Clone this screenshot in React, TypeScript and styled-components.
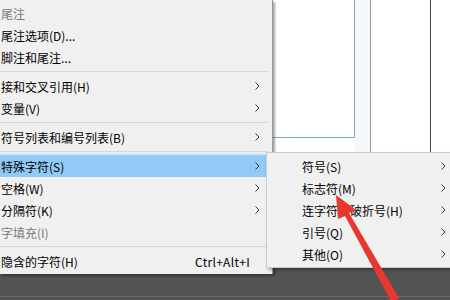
import styled, { createGlobalStyle } from 'styled-components';

const GlobalStyle = createGlobalStyle`
  html, body {
    margin: 0;
    padding: 0;
    background: #ffffff;
  }
  body {
    font-family: "Microsoft YaHei", "Noto Sans CJK SC", "Noto Sans", sans-serif;
    font-size: 12px;
  }
`;

const Page = styled.div`
  position: relative;
  width: 450px;
  height: 300px;
  overflow: hidden;
  display: flex;
  flex-direction: column;
`;

// documento de fondo
const Workspace = styled.div`
  height: 266px;
  display: flex;
  background: #ffffff;
`;

const FrameCol = styled.div`
  width: 355px;
`;

const Frame = styled.div`
  height: 137px;
  border-right: 1px solid #82a8bd;
  border-bottom: 1px solid #82a8bd;
`;

const Column = styled.div<{ $w: number; $bg: string; $line: string }>`
  width: ${(p) => p.$w}px;
  background: ${(p) => p.$bg};
  border-right: 1px solid ${(p) => p.$line};
`;

const DarkBar = styled.div`
  flex: 1;
  background: #535353;
  display: flex;
  flex-direction: column;
  justify-content: flex-end;
`;

const BarLine = styled.div`
  height: 3px;
  border-top: 1px solid #696969;
`;

// menús
const Menu = styled.div`
  position: absolute;
  left: 0;
  top: 0;
  width: 272px;
  padding: 2px 0 2px 0;
  background: #f0f0f0;
  border-right: 1px solid #999999;
  box-shadow: 2px 2px 2px rgba(0, 0, 0, 0.35);
`;

const SubMenu = styled.div`
  position: absolute;
  left: 266px;
  top: 152px;
  width: 190px;
  padding: 2px 0 2px 0;
  background: #f0f0f0;
  border: 1px solid #cccccc;
  box-shadow: 2px 2px 3px rgba(0, 0, 0, 0.35);
`;

const Item = styled.div<{ $active?: boolean; $disabled?: boolean; $indent?: number; $right?: number }>`
  height: 22px;
  display: flex;
  align-items: center;
  padding: 0 ${(p) => p.$right ?? 11}px 0 ${(p) => p.$indent ?? 1}px;
  margin-right: ${(p) => (p.$active ? 6 : 0)}px;
  color: ${(p) => (p.$disabled ? '#7b7b7b' : '#000000')};
  background: ${(p) => (p.$active ? '#92c9f7' : 'transparent')};
  box-shadow: ${(p) => (p.$active ? '0 -2px 0 #d4e8fb' : 'none')};
  white-space: nowrap;
`;

const Label = styled.span`
  flex: 1;
`;

const Shortcut = styled.span`
  margin-right: 3px;
  letter-spacing: 0.3px;
`;

const Slot = styled.span`
  width: 8px;
  display: flex;
  justify-content: center;
`;

const Separator = styled.div`
  height: 7px;
  margin-right: 4px;
  display: flex;
  align-items: center;
  &::after {
    content: '';
    flex: 1;
    height: 1px;
    background: #d7d7d7;
  }
`;

const Annotation = styled.svg`
  position: absolute;
  left: 0;
  top: 0;
  pointer-events: none;
`;

const Chevron = () => (
  <svg width="5" height="8" viewBox="0 0 5 8">
    <polyline points="0.5,0.5 4,4 0.5,7.5" fill="none" stroke="#333333" strokeWidth="1" />
  </svg>
);

type Entry =
  | { sep: true }
  | { sep?: false; label: string; sub?: boolean; disabled?: boolean; active?: boolean; shortcut?: string };

const mainItems: Entry[] = [
  { label: '尾注', disabled: true },
  { label: '尾注选项(D)...' },
  { label: '脚注和尾注...' },
  { sep: true },
  { label: '接和交叉引用(H)', sub: true },
  { label: '变量(V)', sub: true },
  { sep: true },
  { label: '符号列表和编号列表(B)', sub: true },
  { sep: true },
  { label: '特殊字符(S)', sub: true, active: true },
  { label: '空格(W)', sub: true },
  { label: '分隔符(K)', sub: true },
  { label: '字填充(I)', disabled: true },
  { sep: true },
  { label: '隐含的字符(H)', shortcut: 'Ctrl+Alt+I' },
];

const subItems = ['符号(S)', '标志符(M)', '连字符和破折号(H)', '引号(Q)', '其他(O)'];

const App = () => {
  return (
    <>
      <GlobalStyle />
      <Page>
        <Workspace>
          <FrameCol>
            <Frame />
          </FrameCol>
          <Column $w={15} $bg="#f6f9fc" $line="#9ba1aa" />
          <Column $w={59} $bg="#ffffff" $line="#444444" />
        </Workspace>
        <DarkBar>
          <BarLine />
        </DarkBar>

        <Menu>
          {mainItems.map((it, i) =>
            it.sep ? (
              <Separator key={i} />
            ) : (
              <Item key={i} $active={it.active} $disabled={it.disabled} $right={it.active ? 5 : 11}>
                <Label>{it.label}</Label>
                {it.shortcut && <Shortcut>{it.shortcut}</Shortcut>}
                <Slot>{it.sub && <Chevron />}</Slot>
              </Item>
            )
          )}
        </Menu>

        <SubMenu>
          {subItems.map((s) => (
            <Item key={s} $indent={35} $right={10}>
              <Label>{s}</Label>
              <Slot>
                <Chevron />
              </Slot>
            </Item>
          ))}
        </SubMenu>

        <Annotation width="450" height="300" viewBox="0 0 450 300">
          <polygon
            points="336,195 356,210 349,213 399,298 392,303 345,216 338,219"
            fill="#e8372d"
          />
        </Annotation>
      </Page>
    </>
  );
};

export default App;
